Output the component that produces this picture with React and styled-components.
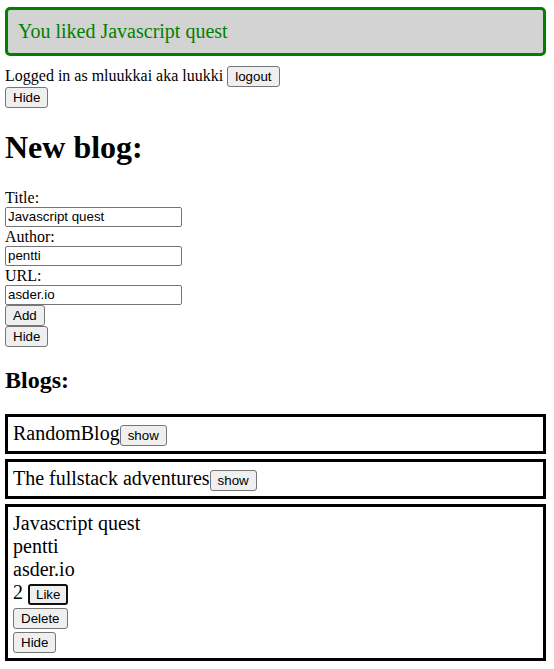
import React from 'react';
import styled, { createGlobalStyle } from 'styled-components';

const GlobalStyle = createGlobalStyle`
  body {
    margin: 7px 8px 8px 5px;
    font-family: 'Liberation Serif', 'Times New Roman', serif;
    font-size: 16px;
    color: #000;
    background: #fff;
  }
`;

const Notification = styled.div`
  color: green;
  background: lightgrey;
  font-size: 20px;
  border: 3px solid green;
  border-radius: 5px;
  padding: 10px;
  margin-bottom: 10px;
`;

const Button = styled.button`
  box-sizing: border-box;
  height: 21px;
  font-family: 'Liberation Sans', Arial, sans-serif;
  font-size: 13.333px;
  color: #000;
  background: #efefef;
  border: ${(p) => (p.$focused ? '2px solid #101010' : '1px solid #767676')};
  border-radius: 3px;
  padding: ${(p) => (p.$focused ? '0 6px' : '0 7px')};
  margin: 0;
  line-height: normal;
  cursor: pointer;
`;

const Line = styled.div`
  display: block;
`;

const Title = styled.h1`
  font-size: 32px;
  font-weight: bold;
  margin: 21.44px 0;
`;

const SubTitle = styled.h2`
  font-size: 24px;
  font-weight: bold;
  margin: 19.92px 0;
`;

const Form = styled.form`
  display: flex;
  flex-direction: column;
  align-items: flex-start;
`;

const Label = styled.div`
  line-height: 19px;
`;

const Input = styled.input`
  box-sizing: border-box;
  width: 177px;
  height: 20px;
  font-family: 'Liberation Sans', Arial, sans-serif;
  font-size: 13.333px;
  border: 1px solid #767676;
  border-radius: 2px;
  padding: 1px 2px;
  margin: 0 0 0 0;
`;

const BlogBox = styled.div`
  border: 3px solid #000;
  padding: 5px;
  margin-bottom: 5px;
  font-size: 20px;
  line-height: 23px;
`;

const BlogRow = styled.div`
  line-height: 23px;
`;

const blogs = [
  { id: 1, title: 'RandomBlog', author: 'someone', url: 'random.io', likes: 0 },
  { id: 2, title: 'The fullstack adventures', author: 'mluukkai', url: 'fs.io', likes: 3 },
  { id: 3, title: 'Javascript quest', author: 'pentti', url: 'asder.io', likes: 2, open: true },
];

const Blog = ({ blog }) => {
  if (!blog.open) {
    return (
      <BlogBox>
        {blog.title}
        <Button>show</Button>
      </BlogBox>
    );
  }
  return (
    <BlogBox>
      <BlogRow>{blog.title}</BlogRow>
      <BlogRow>{blog.author}</BlogRow>
      <BlogRow>{blog.url}</BlogRow>
      <BlogRow>
        {blog.likes} <Button $focused>Like</Button>
      </BlogRow>
      <BlogRow>
        <Button>Delete</Button>
      </BlogRow>
      <BlogRow>
        <Button>Hide</Button>
      </BlogRow>
    </BlogBox>
  );
};

const App = () => {
  return (
    <>
      <GlobalStyle />
      <Notification>You liked Javascript quest</Notification>
      <Line>
        Logged in as mluukkai aka luukki <Button>logout</Button>
      </Line>
      <Line>
        <Button>Hide</Button>
      </Line>
      <Title>New blog:</Title>
      <Form onSubmit={(e) => e.preventDefault()}>
        <Label>Title:</Label>
        <Input defaultValue="Javascript quest" />
        <Label>Author:</Label>
        <Input defaultValue="pentti" />
        <Label>URL:</Label>
        <Input defaultValue="asder.io" />
        <Button type="submit">Add</Button>
      </Form>
      <Line>
        <Button>Hide</Button>
      </Line>
      <SubTitle>Blogs:</SubTitle>
      {blogs.map((b) => (
        <Blog key={b.id} blog={b} />
      ))}
    </>
  );
};

export default App;
